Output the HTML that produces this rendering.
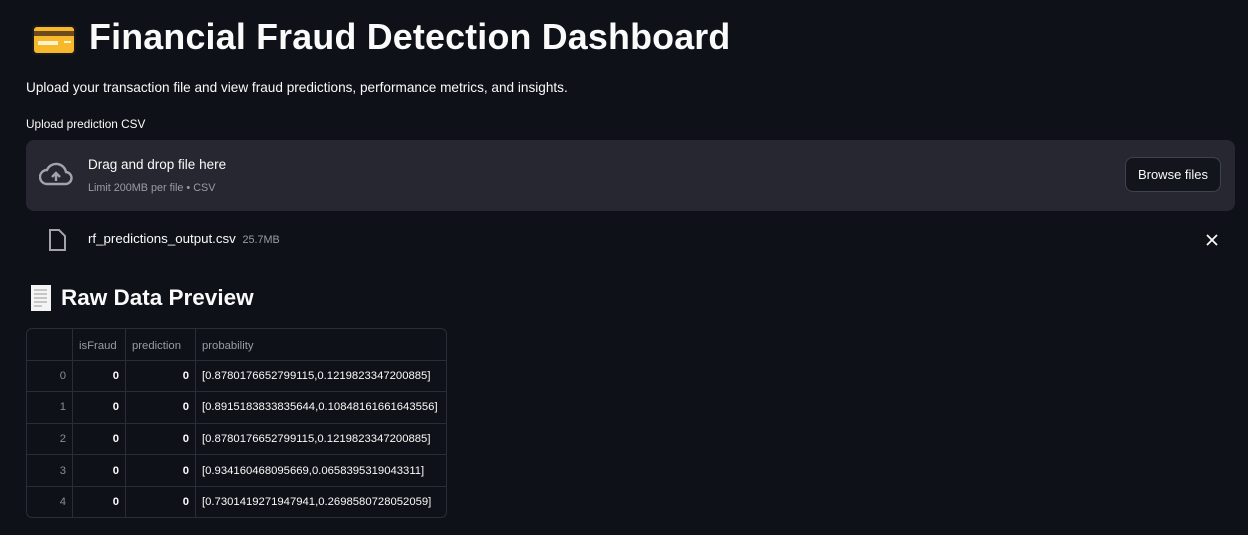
<!DOCTYPE html>
<html><head><style>
*{margin:0;padding:0;box-sizing:border-box}
body{width:1248px;height:535px;background:#0e1117;color:#fafafa;font-family:"Liberation Sans",sans-serif;position:relative;overflow:hidden}
.a{position:absolute;white-space:nowrap}
table{border-collapse:collapse;font-size:11.3px;table-layout:fixed}
td,th{border:1px solid #2b2d36;height:31.6px;padding:0 6px}
th{font-weight:normal;color:#9a9ca3;text-align:left;padding-top:3px}
td.n{text-align:right;color:#fafafa;font-weight:bold}
td.i{text-align:right;color:#8a8c93}
</style></head><body>
<svg class="a" style="left:32px;top:25px" width="44" height="30" viewBox="0 0 44 30">
<rect x="0" y="0" width="44" height="30" rx="4" fill="#1a1a1a"/>
<rect x="2" y="2" width="40" height="26" rx="3" fill="#f7b92b"/>
<rect x="2" y="6" width="40" height="5" fill="#6b4b1e"/>
<rect x="6" y="16" width="20" height="4" fill="#fff3cc"/>
<rect x="32" y="16" width="7" height="2" fill="#fff3cc"/>
</svg>
<div class="a" style="left:89px;top:17px;font-size:35.8px;font-weight:bold;letter-spacing:0.2px">Financial Fraud Detection Dashboard</div>
<div class="a" style="left:26px;top:80px;font-size:13.6px">Upload your transaction file and view fraud predictions, performance metrics, and insights.</div>
<div class="a" style="left:26px;top:117px;font-size:11.8px">Upload prediction CSV</div>
<div class="a" style="left:26px;top:140px;width:1209px;height:71px;background:#262730;border-radius:8px"></div>
<svg class="a" style="left:39px;top:162px" width="34" height="26" viewBox="0 0 34 26"><path d="M8 22h18a6 6 0 0 0 1-12A10 10 0 0 0 8 8a7 7 0 0 0 0 14z" fill="none" stroke="#a3a4a9" stroke-width="2.4"/><path d="M17 19v-7M13 15l4-4 4 4" stroke="#a3a4a9" stroke-width="2.4" fill="none"/></svg>
<div class="a" style="left:88px;top:157px;font-size:13.5px">Drag and drop file here</div>
<div class="a" style="left:88px;top:182px;font-size:10.8px;color:#9a9ca3">Limit 200MB per file • CSV</div>
<div class="a" style="left:1125px;top:157px;width:96px;height:35px;border:1px solid #40424b;border-radius:8px;background:#13151c;font-size:13px;text-align:center;line-height:33px">Browse files</div>
<svg class="a" style="left:48px;top:229px" width="18" height="22" viewBox="0 0 18 22"><path d="M2 1h9l6 6v14H2z" fill="none" stroke="#a3a4a9" stroke-width="2"/></svg>
<div class="a" style="left:88px;top:231px;font-size:13.3px">rf_predictions_output.csv <span style="font-size:10.8px;color:#9a9ca3">&nbsp;25.7MB</span></div>
<svg class="a" style="left:1206px;top:234px" width="12" height="12"><path d="M1 1l10 10M11 1L1 11" stroke="#fafafa" stroke-width="1.8"/></svg>
<svg class="a" style="left:30px;top:285px" width="22" height="26"><rect x="1" y="0" width="20" height="26" fill="#f4f4f4"/><path d="M4 5h13M4 9h13M4 13h13M4 17h13M4 21h8" stroke="#999" stroke-width="1"/></svg>
<div class="a" style="left:61px;top:285px;font-size:22.5px;font-weight:bold">Raw Data Preview</div>
<div class="a" style="left:26px;top:328px;width:421px;height:190px;border:1px solid #2b2d36;border-radius:6px;overflow:hidden">
<table style="width:421px;margin:-1px">
<tr><th style="width:46px"></th><th style="width:53px">isFraud</th><th style="width:70px">prediction</th><th>probability</th></tr>
<tr><td class="i">0</td><td class="n">0</td><td class="n">0</td><td>[0.8780176652799115,0.1219823347200885]</td></tr>
<tr><td class="i">1</td><td class="n">0</td><td class="n">0</td><td>[0.8915183833835644,0.10848161661643556]</td></tr>
<tr><td class="i">2</td><td class="n">0</td><td class="n">0</td><td>[0.8780176652799115,0.1219823347200885]</td></tr>
<tr><td class="i">3</td><td class="n">0</td><td class="n">0</td><td>[0.934160468095669,0.0658395319043311]</td></tr>
<tr><td class="i">4</td><td class="n">0</td><td class="n">0</td><td>[0.7301419271947941,0.2698580728052059]</td></tr>
</table></div>
</body></html>
